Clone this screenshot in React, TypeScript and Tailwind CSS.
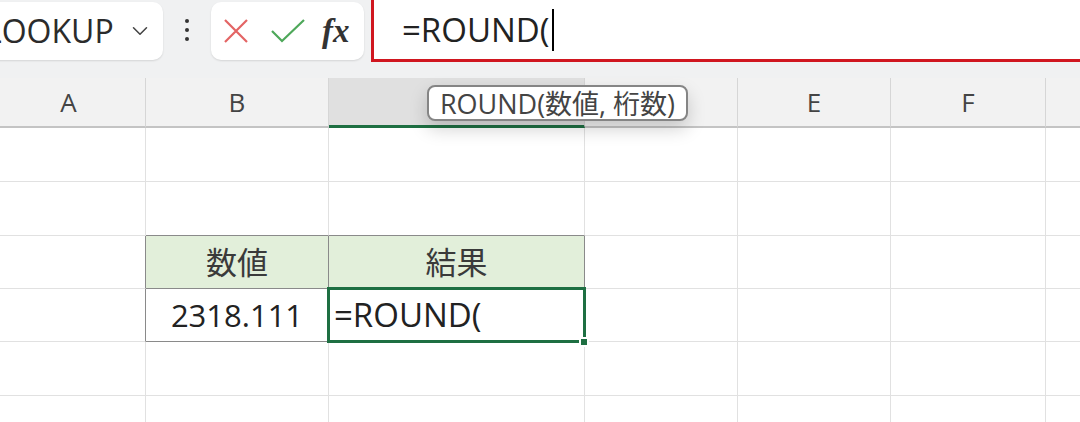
import React from "react";
import { ChevronDown } from "lucide-react";

const font = { fontFamily: '"Open Sans", "Noto Sans CJK JP", sans-serif' };

const columns = [
  { key: "A", width: "w-[154px]" },
  { key: "B", width: "w-[183px]" },
  { key: "C", width: "w-[256px]" },
  { key: "D", width: "w-[153px]" },
  { key: "E", width: "w-[153px]" },
  { key: "F", width: "w-[155px]" },
  { key: "G", width: "w-[120px]" },
];

const rowHeights = ["h-[54px]", "h-[54px]", "h-[53px]", "h-[53px]", "h-[54px]", "h-[54px]"];

// table: row 3 headers (B,C), row 4 values
const cellText: Record<string, string> = {
  "2B": "数値",
  "2C": "結果",
  "3B": "2318.111",
};

const inTable = (r: number, c: string) => (r === 2 || r === 3) && (c === "B" || c === "C");

const Cell = ({ r, c, width }: { r: number; c: string; width: string }) => {
  const dark = inTable(r, c);
  const rightDark = dark || ((r === 2 || r === 3) && c === "A");
  const bottomDark = dark || (r === 1 && (c === "B" || c === "C"));
  const fill = r === 2 && dark ? "bg-[#e2efda]" : "bg-white";
  const selected = r === 3 && c === "C";
  return (
    <div
      className={`${width} shrink-0 h-full border-r border-b relative flex items-center ${fill} ${
        rightDark ? "border-r-[#8a8a8a]" : "border-r-[#e1e1e1]"
      } ${bottomDark ? "border-b-[#8a8a8a]" : "border-b-[#e1e1e1]"} ${
        selected ? "justify-start pl-[5px]" : "justify-center"
      }`}
    >
      {cellText[`${r}${c}`] && (
        <span className={`text-[31px] ${r === 2 ? "text-[#3a3a3a]" : "text-[#222]"}`}>
          {cellText[`${r}${c}`]}
        </span>
      )}
      {selected && (
        <>
          <span className="text-[33px] text-[#222]">=ROUND(</span>
          <div className="absolute z-10 -left-[2px] -top-[2px] -right-[2px] -bottom-[2px] border-[3px] border-[#1e6f42]" />
          <div className="absolute z-20 -right-[5px] -bottom-[6px] w-[10px] h-[10px] bg-[#1e6f42] border-2 border-white" />
        </>
      )}
    </div>
  );
};

export default function App() {
  return (
    <div className="w-[1080px] h-[422px] overflow-hidden bg-white relative" style={font}>
      {/* toolbar */}
      <div className="h-[78px] bg-[#f0f1f2] flex items-start">
        <div className="ml-[-20px] mt-[2px] w-[183px] h-[58px] rounded-[10px] bg-white shadow-[0_1px_2px_rgba(0,0,0,0.12)] flex items-center shrink-0">
          <span className="pl-[5px] text-[32px] text-[#2b2b2b] leading-none">LOOKUP</span>
          <ChevronDown className="ml-auto mr-[10px] text-[#444]" size={26} strokeWidth={1.4} />
        </div>
        <div className="w-[48px] h-[60px] flex flex-col items-center justify-center gap-[5px] shrink-0">
          <div className="w-[4px] h-[4px] rounded-full bg-[#333]" />
          <div className="w-[4px] h-[4px] rounded-full bg-[#333]" />
          <div className="w-[4px] h-[4px] rounded-full bg-[#333]" />
        </div>
        <div className="mt-[2px] w-[153px] h-[58px] rounded-[10px] bg-white shadow-[0_1px_2px_rgba(0,0,0,0.12)] flex items-center shrink-0">
          <svg width="26" height="26" viewBox="0 0 26 26" className="ml-[12px]">
            <path d="M2 2 L24 24 M24 2 L2 24" stroke="#e36464" strokeWidth="2.2" fill="none" />
          </svg>
          <svg width="36" height="26" viewBox="0 0 36 26" className="ml-[21px]">
            <path d="M2 13 L12 23 L34 2" stroke="#4ea85a" strokeWidth="2.2" fill="none" />
          </svg>
          <span
            className="ml-[16px] text-[33px] italic font-bold text-[#333] leading-none"
            style={{ fontFamily: '"Liberation Serif", serif' }}
          >
            fx
          </span>
        </div>
        <div className="ml-[7px] w-[800px] h-[62px] bg-white border-l-[3px] border-b-[3px] border-[#d0161f] flex items-center shrink-0">
          <span className="pl-[28px] text-[33px] text-[#222] leading-none">=ROUND(</span>
          <span className="ml-[2px] w-[2px] h-[42px] bg-black" />
        </div>
      </div>

      {/* column headers */}
      <div className="flex ml-[-8px] h-[50px]">
        {columns.map((col) => (
          <div
            key={col.key}
            className={`${col.width} shrink-0 h-full flex items-center justify-center border-r border-r-[#d6d6d6] ${
              col.key === "C"
                ? "bg-[#e0e0e0] border-b-[3px] border-b-[#1e6f42]"
                : "bg-[#f2f2f2] border-b-2 border-b-[#c4c4c4]"
            }`}
          >
            {col.key !== "C" && col.key !== "D" && col.key !== "G" && (
              <span className="text-[26px] text-[#444]">{col.key}</span>
            )}
          </div>
        ))}
      </div>

      {/* grid */}
      <div className="ml-[-8px] flex flex-col">
        {rowHeights.map((h, r) => (
          <div key={r} className={`flex ${h}`}>
            {columns.map((col) => (
              <Cell key={col.key} r={r} c={col.key} width={col.width} />
            ))}
          </div>
        ))}
      </div>

      {/* function tooltip */}
      <div className="absolute left-[427px] top-[85px] w-[261px] h-[36px] rounded-[8px] border-2 border-[#858585] bg-white shadow-[0_8px_18px_rgba(0,0,0,0.18)] flex items-center justify-center">
        <span className="text-[27px] text-[#444] leading-none whitespace-nowrap">ROUND(数値, 桁数)</span>
      </div>
    </div>
  );
}
